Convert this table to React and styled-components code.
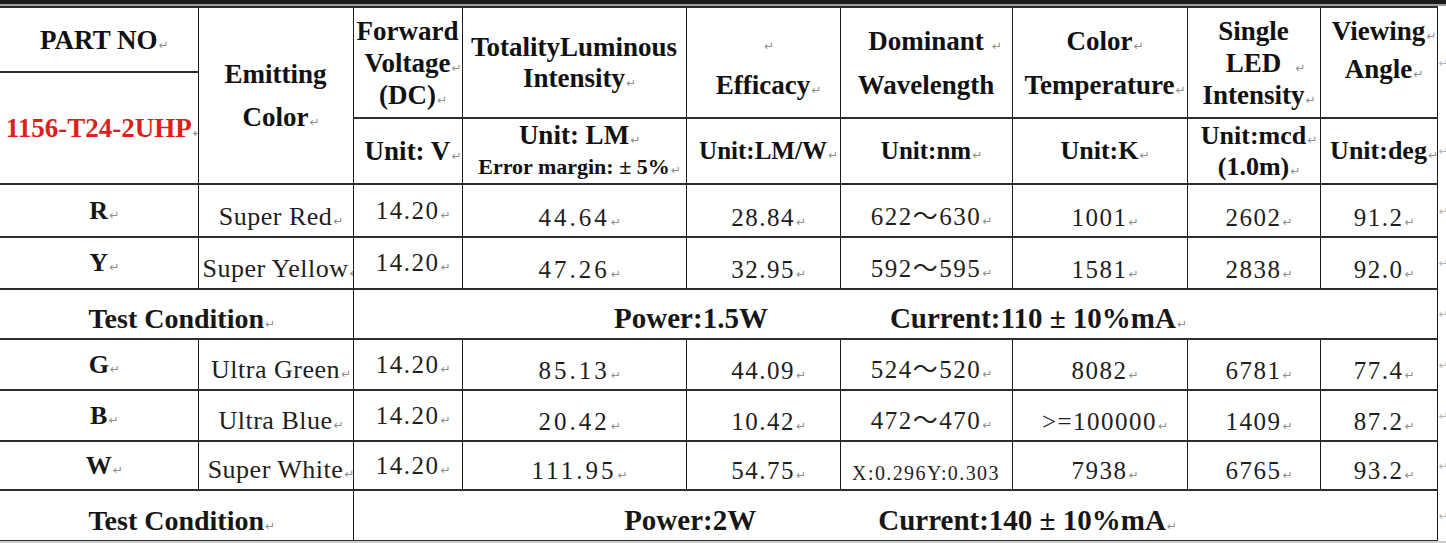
import React from 'react';
import styled, { createGlobalStyle } from 'styled-components';

const GlobalStyle = createGlobalStyle`
    html, body {
        margin: 0;
        padding: 0;
        background: #cfcfcf;
    }
    #root {
        width: 1446px;
    }
`;

const serif = '"Liberation Serif", "Times New Roman", "Noto Sans CJK SC", serif';

const Sheet = styled.div`
    width: 1446px;
    height: 541px;
    background: #ffffff;
    overflow: hidden;
`;

const TopEdge = styled.div`
    height: 4px;
    background: #1b1b1b;
    border-bottom: 2px solid #9c9c9c;
`;

const Table = styled.table`
    width: 1446px;
    border-collapse: collapse;
    table-layout: fixed;
    font-family: ${serif};
    color: #161616;
`;

const Cell = styled.td`
    border-top: 2px solid #2e2e2e;
    border-bottom: 2px solid #2e2e2e;
    border-left: 1px solid #1c1c1c;
    border-right: 1px solid #1c1c1c;
    padding: 0 2px;
    overflow: hidden;
    white-space: nowrap;
    text-align: center;
    &:first-child {
        border-left: none;
    }
`;

const Head = styled(Cell)`
    font-weight: bold;
    font-size: ${p => p.$size || 27}px;
    line-height: ${p => p.$lh || 32}px;
    vertical-align: ${p => p.$va || 'middle'};
    padding-top: ${p => p.$pt || 0}px;
    color: ${p => p.$color || '#111111'};
`;

const Small = styled.span`
    font-size: 22px;
`;

const Code = styled(Cell)`
    font-weight: bold;
    font-size: 26px;
    vertical-align: middle;
`;

const Value = styled(Cell)`
    font-size: ${p => p.$size || 25}px;
    letter-spacing: ${p => p.$ls ?? 1.5}px;
    vertical-align: ${p => p.$va || 'bottom'};
    padding-bottom: ${p => (p.$va === 'middle' ? 0 : 4)}px;
    color: #1e1e1e;
`;

const Condition = styled(Cell)`
    font-weight: bold;
    font-size: ${p => p.$size || 28}px;
    vertical-align: bottom;
    padding-bottom: 3px;
`;

const ConditionLine = styled.div`
    display: flex;
    justify-content: center;
    align-items: baseline;
    gap: 122px;
    font-size: 29px;
`;

const EndCell = styled.td`
    border: none;
    border-right: 1px solid #c4c4c4;
    padding: 0;
    overflow: hidden;
    vertical-align: middle;
`;

const EndMark = styled.span`
    display: block;
    margin-left: 1px;
    font-family: "DejaVu Sans", sans-serif;
    font-size: 12px;
    line-height: 1;
    color: #b5b5b5;
    white-space: nowrap;
`;

const Mark = styled.span`
    display: inline-block;
    width: 0;
    overflow: visible;
    white-space: nowrap;
    font-family: "DejaVu Sans", sans-serif;
    font-size: 12px;
    line-height: 1;
    font-weight: normal;
    letter-spacing: 0;
    color: #8e8e8e;
    text-indent: ${p => p.$gap || 1}px;
`;

const M = ({ gap }) => <Mark $gap={gap}>↵</Mark>;

const groupA = [
    { code: 'R', name: 'Super Red', v: '14.20', lm: '44.64', eff: '28.84', wl: '622～630', ct: '1001', mcd: '2602', ang: '91.2', h: 53 },
    { code: 'Y', name: 'Super Yellow', v: '14.20', lm: '47.26', eff: '32.95', wl: '592～595', ct: '1581', mcd: '2838', ang: '92.0', h: 52 }
];

const groupB = [
    { code: 'G', name: 'Ultra Green', v: '14.20', lm: '85.13', eff: '44.09', wl: '524～520', ct: '8082', mcd: '6781', ang: '77.4', h: 51 },
    { code: 'B', name: 'Ultra Blue', v: '14.20', lm: '20.42', eff: '10.42', wl: '472～470', ct: '>=100000', mcd: '1409', ang: '87.2', h: 51 },
    { code: 'W', name: 'Super White', v: '14.20', lm: '111.95', eff: '54.75', wl: 'X:0.296Y:0.303', ct: '7938', mcd: '6765', ang: '93.2', h: 49, smallWl: true }
];

const widths = [198, 155, 109, 224, 154, 172, 175, 133, 117, 9];

const DataRow = ({ row }) => (
    <tr style={{ height: row.h }}>
        <Code>{row.code}<M /></Code>
        <Value $ls={0.5} $size={26}>{row.name}<M /></Value>
        <Value $va="middle">{row.v}<M /></Value>
        <Value $ls={3}>{row.lm}<M /></Value>
        <Value>{row.eff}<M /></Value>
        {row.smallWl
            ? <Value $size={20} $ls={1.4}>{row.wl}</Value>
            : <Value>{row.wl}<M /></Value>}
        <Value>{row.ct}<M /></Value>
        <Value>{row.mcd}<M /></Value>
        <Value>{row.ang}<M /></Value>
        <EndCell><EndMark>↵</EndMark></EndCell>
    </tr>
);

const ConditionRow = ({ power, current, h }) => (
    <tr style={{ height: h }}>
        <Condition colSpan={2}>Test Condition<M /></Condition>
        <Condition colSpan={7}>
            <ConditionLine>
                <span>{power}</span>
                <span>{current}<M /></span>
            </ConditionLine>
        </Condition>
        <EndCell><EndMark>↵</EndMark></EndCell>
    </tr>
);

const App = () => (
    <>
        <GlobalStyle />
        <Sheet>
            <TopEdge />
            <Table>
                <colgroup>
                    {widths.map((w, i) => <col key={i} style={{ width: w }} />)}
                </colgroup>
                <tbody>
                    <tr style={{ height: 65 }}>
                        <Head>PART NO<M /></Head>
                        <Head rowSpan={3} $lh={43}>Emitting<br />Color<M /></Head>
                        <Head rowSpan={2}>Forward<br />Voltage<M /><br />(DC)<M /></Head>
                        <Head rowSpan={2} $lh={31}>TotalityLuminous<br />Intensity<M /></Head>
                        <Head rowSpan={2} $lh={44}><M /><br />Efficacy<M /></Head>
                        <Head rowSpan={2} $lh={44}>Dominant<M gap={8} /><br />Wavelength</Head>
                        <Head rowSpan={2} $lh={44}>Color<M /><br />Temperature<M /></Head>
                        <Head rowSpan={2}>Single<br />LED<M gap={14} /><br />Intensity<M /></Head>
                        <Head rowSpan={2} $lh={38} $va="top" $pt={4}>Viewing<M /><br />Angle<M /></Head>
                        <EndCell rowSpan={2}><EndMark>↵</EndMark></EndCell>
                    </tr>
                    <tr style={{ height: 46 }}>
                        <Head rowSpan={2} $color="#dc1f1a">1156-T24-2UHP<M /></Head>
                    </tr>
                    <tr style={{ height: 66 }}>
                        <Head>Unit: V<M /></Head>
                        <Head $lh={30}>Unit: LM<M /><br /><Small>Error margin: ± 5%<M /></Small></Head>
                        <Head $size={25}>Unit:LM/W<M /></Head>
                        <Head $size={25}>Unit:nm<M /></Head>
                        <Head $size={26}>Unit:K<M /></Head>
                        <Head $size={26} $lh={31}>Unit:mcd<M /><br />(1.0m)<M /></Head>
                        <Head $size={26}>Unit:deg<M /></Head>
                        <EndCell><EndMark>↵</EndMark></EndCell>
                    </tr>
                    {groupA.map(r => <DataRow key={r.code} row={r} />)}
                    <ConditionRow power="Power:1.5W" current="Current:110 ± 10%mA" h={50} />
                    {groupB.map(r => <DataRow key={r.code} row={r} />)}
                    <ConditionRow power="Power:2W" current="Current:140 ± 10%mA" h={51} />
                </tbody>
            </Table>
        </Sheet>
    </>
);

export default App;
